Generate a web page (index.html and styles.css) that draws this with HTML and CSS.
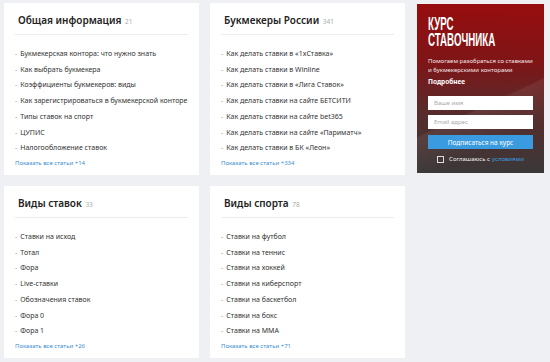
FILE: index.html
```html
<!DOCTYPE html>
<html>
<head>
 <meta charset="UTF-8">
 <title>Статьи о ставках</title>
 <link rel="stylesheet" href="styles.css">
</head>
<body>
<div class="grid">
  <div class="card">
    <div class="ttl">Общая информация <span class="cnt">21</span></div>
    <ul>
      <li>Букмекерская контора: что нужно знать</li>
      <li>Как выбрать букмекера</li>
      <li>Коэффициенты букмекеров: виды</li>
      <li>Как зарегистрироваться в букмекерской конторе</li>
      <li>Типы ставок на спорт</li>
      <li>ЦУПИС</li>
      <li>Налогообложение ставок</li>
    </ul>
    <a class="more" href="#">Показать все статьи +14</a>
  </div>
  <div class="card">
    <div class="ttl">Букмекеры России <span class="cnt">341</span></div>
    <ul>
      <li>Как делать ставки в «1xСтавка»</li>
      <li>Как делать ставки в Winline</li>
      <li>Как делать ставки в «Лига Ставок»</li>
      <li>Как делать ставки на сайте БЕТСИТИ</li>
      <li>Как делать ставки на сайте bet365</li>
      <li>Как делать ставки на сайте «Париматч»</li>
      <li>Как делать ставки в БК «Леон»</li>
    </ul>
    <a class="more" href="#">Показать все статьи +334</a>
  </div>
  <div class="promo">
    <div class="promo-h">КУРС</div>
    <div class="promo-h">СТАВОЧНИКА</div>
    <p class="promo-t">Помогаем разобраться со ставками и букмекерскими конторами</p>
    <a class="promo-l" href="#">Подробнее</a>
    <form class="sub">
      <input type="text" placeholder="Ваше имя">
      <input type="text" placeholder="Email адрес">
      <button type="button">Подписаться на курс</button>
      <label class="agree"><span class="box"></span>Соглашаюсь с <a href="#">условиями</a></label>
    </form>
  </div>
  <div class="card">
    <div class="ttl">Виды ставок <span class="cnt">33</span></div>
    <ul>
      <li>Ставки на исход</li>
      <li>Тотал</li>
      <li>Фора</li>
      <li>Live-ставки</li>
      <li>Обозначения ставок</li>
      <li>Фора 0</li>
      <li>Фора 1</li>
    </ul>
    <a class="more" href="#">Показать все статьи +26</a>
  </div>
  <div class="card">
    <div class="ttl">Виды спорта <span class="cnt">78</span></div>
    <ul>
      <li>Ставки на футбол</li>
      <li>Ставки на теннис</li>
      <li>Ставки на хоккей</li>
      <li>Ставки на киберспорт</li>
      <li>Ставки на баскетбол</li>
      <li>Ставки на бокс</li>
      <li>Ставки на ММА</li>
    </ul>
    <a class="more" href="#">Показать все статьи +71</a>
  </div>
</div>
</body>
</html>
```

FILE: styles.css
```css
body { margin: 0; background: #eff0f3; font-family: "Noto Sans", sans-serif;
  color: #333; }
.grid { display: grid; grid-template-columns: 195px 195px 128px;
  grid-template-rows: 172px 172px; gap: 11px; padding: 3px 0 0 4px; }
.card { background: #fff; padding: 0 11px; box-sizing: border-box; }
.ttl { font-size: 10px; font-weight: 600; color: #222; padding: 10px 0 0 3px;
  height: 21px; border-bottom: 1px solid #ececec; }
.cnt { font-size: 6.5px; font-weight: 400; color: #aaa; margin-left: 1px; }
ul { list-style: none; margin: 0; padding: 11px 0 0 0; }
li { font-size: 7px; line-height: 15.7px; color: #333; white-space: nowrap; }
li:before { content: "-"; color: #999; margin-right: 3px; }
.more { display: block; font-size: 6px; color: #3d8fcf; text-decoration: none;
  margin-top: 3px; }
.promo { grid-row: 1; grid-column: 3; margin: 1px 0 2px 1px; padding: 12px 11px 0 11px;
  color: #fff; box-sizing: border-box;
  background: linear-gradient(155deg, rgba(255,255,255,0) 58%, rgba(255,255,255,0.07) 59%, rgba(255,255,255,0) 78%),
    linear-gradient(180deg, #970d0f 0%, #7e1517 35%, #5a2b2b 62%, #3a3838 100%); }
.promo-h { font-family: "Liberation Sans", sans-serif; font-weight: 700;
  font-size: 18px; line-height: 16px; transform: scaleX(0.54);
  transform-origin: left; white-space: nowrap; }
.promo-t { font-size: 6px; line-height: 8.5px; margin: 9px 0 0; color: #f3e6e6; }
.promo-l { display: block; font-size: 6.5px; font-weight: 700; color: #fff;
  text-decoration: none; margin-top: 3px; }
.sub { display: flex; flex-direction: column; gap: 5px; margin-top: 10px; }
.sub input { height: 14px; border: 0; padding: 0 6px; font-size: 6px;
  font-family: "Noto Sans", sans-serif; box-sizing: border-box; }
.sub input::placeholder { color: #aaa; }
.sub button { height: 14px; border: 0; background: #3a9be0; color: #fff; font-size: 6.5px;
  font-family: "Noto Sans", sans-serif; margin-top: 1px; }
.agree { font-size: 6px; color: #eee; display: flex; align-items: center;
  justify-content: center; gap: 5px; margin-top: 1px; }
.agree a { color: #3a9be0; text-decoration: none; margin-left: -3px; }
.box { width: 5px; height: 5px; border: 1px solid #ddd; }
```
